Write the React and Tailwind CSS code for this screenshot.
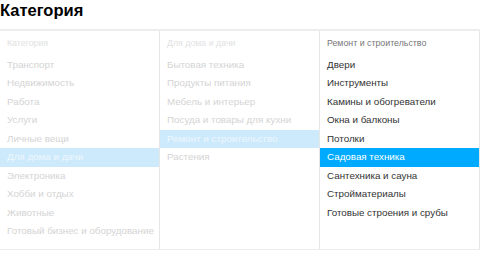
import React from 'react';

const rootItems = [
  'Транспорт',
  'Недвижимость',
  'Работа',
  'Услуги',
  'Личные вещи',
  'Для дома и дачи',
  'Электроника',
  'Хобби и отдых',
  'Животные',
  'Готовый бизнес и оборудование',
];

const homeItems = [
  'Бытовая техника',
  'Продукты питания',
  'Мебель и интерьер',
  'Посуда и товары для кухни',
  'Ремонт и строительство',
  'Растения',
];

const repairItems = [
  'Двери',
  'Инструменты',
  'Камины и обогреватели',
  'Окна и балконы',
  'Потолки',
  'Садовая техника',
  'Сантехника и сауна',
  'Стройматериалы',
  'Готовые строения и срубы',
];

const Column = ({ title, items, selected, muted }) => (
  <div className="border-r border-[#e6e6e6] pt-[4px]">
    <div
      className={`px-[7px] h-[16px] leading-[16px] text-[8.8px] mb-[4.5px] ${
        muted ? 'text-[#e2e2e2]' : 'text-[#777]'
      }`}
    >
      {title}
    </div>
    {items.map((item) => {
      const active = item === selected;
      let cls = muted ? 'text-[#d4d4d4]' : 'text-[#333]';
      if (active) cls = muted ? 'bg-[#cdeafc] text-[#eef7fd]' : 'bg-[#00aaff] text-white';
      return (
        <div key={item} className={`px-[7px] h-[18.5px] leading-[18.5px] text-[9.8px] whitespace-nowrap ${cls}`}>
          {item}
        </div>
      );
    })}
  </div>
);

export default function App() {
  return (
    <div className="w-[480px] h-[253px] bg-white font-['Liberation_Sans',Arial,sans-serif]">
      <div className="h-[29px] text-[16.5px] leading-[20px] font-bold text-black">Категория</div>
      <div className="grid grid-cols-3 h-[221px] border-t-2 border-b border-[#ececec]">
        <Column title="Категория" items={rootItems} selected="Для дома и дачи" muted />
        <Column title="Для дома и дачи" items={homeItems} selected="Ремонт и строительство" muted />
        <Column title="Ремонт и строительство" items={repairItems} selected="Садовая техника" />
      </div>
    </div>
  );
}
